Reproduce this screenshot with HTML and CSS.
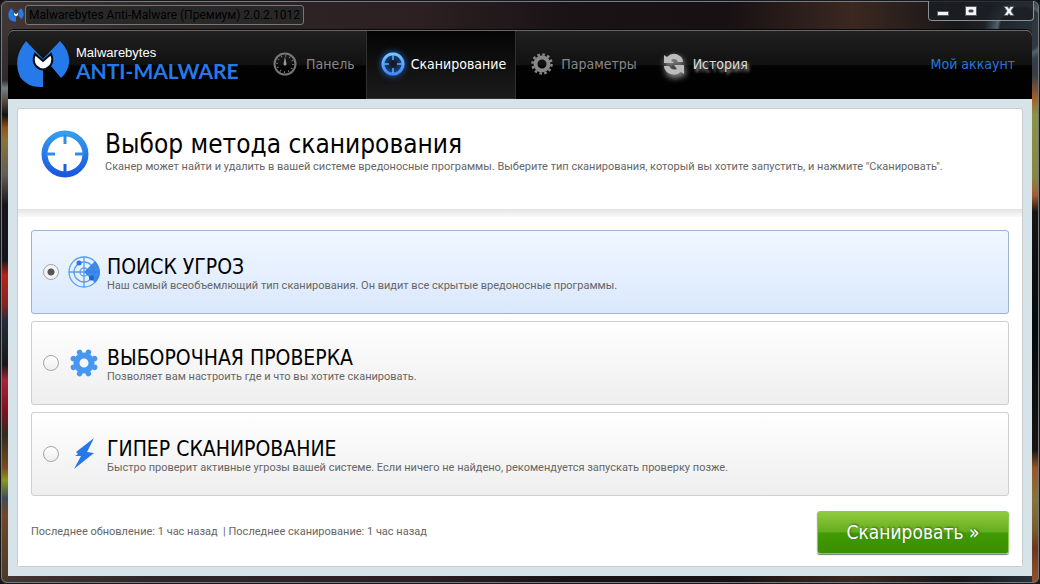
FILE: index.html
```html
<!DOCTYPE html>
<html lang="ru">
<head>
<meta charset="utf-8">
<title>Malwarebytes Anti-Malware</title>
<link rel="stylesheet" href="styles.css">
</head>
<body>
<svg class="defs" width="0" height="0" aria-hidden="true">
  <defs>
    <symbol id="logo" viewBox="0 0 54 48">
      <path fill="#2679e8" d="M10 1 27 19 44 1Q54 11 53 23 52 32 45 38L35 26 27 29V47Q12 48 4 37-4 18 10 1Z"/>
      <path fill="#fff" stroke="#080c14" stroke-width="2" d="M19 14 27 21 35 14Q38 21 34 26 27 33 20 26 16 21 19 14Z"/>
    </symbol>
    <linearGradient id="blue" x1="0" y1="0" x2="0" y2="1"><stop offset="0" stop-color="#359cee"/><stop offset="1" stop-color="#1b58e0"/></linearGradient>
    <linearGradient id="glow" x1="0" y1="0" x2="0" y2="1"><stop offset="0" stop-color="#71c8ff"/><stop offset="1" stop-color="#4086ff"/></linearGradient>
  </defs>
</svg>
<div class="window">
  <div class="titlebar">
    <svg class="app-icon"><use href="#logo"/></svg>
    <span class="title">Malwarebytes Anti-Malware (Премиум) 2.0.2.1012</span>
    <div class="controls">
      <button aria-label="Свернуть"><svg width="14" height="14" viewBox="0 0 14 14"><path fill="#f4f4f4" stroke="#565b68" d="M1.500 7.500h11v4h-11z"/></svg></button>
      <button aria-label="Развернуть"><svg width="14" height="14" viewBox="0 0 14 14"><path fill="#f4f4f4" stroke="#565b68" fill-rule="evenodd" d="M1.500 2.500h11v9h-11zM5 6v2h4V6z"/></svg></button>
      <button class="close" aria-label="Закрыть"><svg width="14" height="14" viewBox="0 0 14 14"><path fill="#f4f4f4" stroke="#565b68" d="M2 2.500h3.500L7 4.500 8.500 2.500H12L9 7l3 4.500H8.500L7 9.500 5.500 11.500H2L5 7z"/></svg></button>
    </div>
  </div>
  <div class="app">
    <header class="header">
      <div class="brand">
        <svg class="brand-mark"><use href="#logo"/></svg>
        <div class="brand-text"><span class="brand-top">Malwarebytes</span><span class="brand-main">ANTI-MALWARE</span></div>
      </div>
      <nav class="nav">
        <a href="#" class="tab">
          <svg class="tab-icon" viewBox="0 0 24 24"><circle cx="12" cy="12" r="10.500" fill="none" stroke="#777" stroke-width="2"/><circle cx="12" cy="12" r="8" fill="none" stroke="#777" stroke-width="2" stroke-dasharray="1 3.190" /><path d="M12 4.500 13.500 12a1.500 1.500 0 0 1-3 0z" fill="#999"/></svg>Панель</a>
        <a href="#" class="tab active" aria-current="page">
          <svg class="tab-icon glow" viewBox="0 0 24 24"><path fill="none" stroke="url(#glow)" stroke-width="3" d="M12 2a10 10 0 1 0 .01 0z"/><path stroke="#62adff" stroke-width="1.500" d="M12 3v5M12 16v5M3 12h5M16 12h5"/></svg>Сканирование</a>
        <a href="#" class="tab settings">
          <svg class="tab-icon" viewBox="0 0 24 24"><circle cx="12" cy="12" r="6.500" fill="none" stroke="#888" stroke-width="4"/><circle cx="12" cy="12" r="9.500" fill="none" stroke="#888" stroke-width="2.500" stroke-dasharray="2.600 2.374"/></svg>Параметры</a>
        <a href="#" class="tab history">
          <svg class="tab-icon" viewBox="0 0 24 24"><path fill="#bcbcbc" d="M2 3 5 5Q11-1 18 4 21 6 21 10H16Q14 5 9 8L12 11H2ZM22 22 19 20Q13 25 6 21 2 18 2 14H7Q10 19 15 17L12 13H22Z"/></svg>История</a>
      </nav>
      <a href="#" class="account">Мой аккаунт</a>
    </header>
    <main class="panel">
      <section class="intro">
        <svg class="target" viewBox="0 0 48 48"><circle cx="24" cy="24" r="20.500" fill="none" stroke="url(#blue)" stroke-width="6"/><path fill="#318be9" d="M22.500 5h3v9h-3zM5 22.500h9v3H5zM34 22.500h9v3h-9z"/><path fill="#1c5de1" d="M22.500 34h3v9h-3z"/></svg>
        <div><h1>Выбор метода сканирования</h1><p>Сканер может найти и удалить в вашей системе вредоносные программы. Выберите тип сканирования, который вы хотите запустить, и нажмите "Сканировать".</p></div>
      </section>
      <form class="form">
        <label class="option">
          <input type="radio" name="scan" checked>
          <svg class="option-icon" viewBox="0 0 32 32"><g fill="none" stroke="#5a9ff0" stroke-width="1.300"><circle cx="16" cy="16" r="15"/><circle cx="16" cy="16" r="10"/><circle cx="16" cy="16" r="4"/><path d="M16 1v30M1 16h30"/></g><path fill="#2f80e7" fill-opacity=".9" d="M16 16 27 5Q37 17 27 27z"/><circle cx="11" cy="7" r="2.500" fill="#2678e6"/><circle cx="23.500" cy="22" r="2.500" fill="#1765d8"/></svg>
          <span class="copy"><span class="name">ПОИСК УГРОЗ</span><span class="note">Наш самый всеобъемлющий тип сканирования. Он видит все скрытые вредоносные программы.</span></span>
        </label>
        <label class="option">
          <input type="radio" name="scan">
          <svg class="option-icon" viewBox="0 0 32 32"><circle cx="16" cy="16" r="7.500" fill="none" stroke="#4797f2" stroke-width="6"/><g stroke="#4797f2" stroke-width="5.500" stroke-linecap="round" transform="rotate(22.500 16 16)"><path d="M16 5V4.500M16 27v.500M5 16h-.500M27 16h.500M8.200 8.200l-.300-.300M23.800 23.800l.300.300M8.200 23.800l-.300.300M23.800 8.200l.300-.300"/></g></svg>
          <span class="copy"><span class="name">ВЫБОРОЧНАЯ ПРОВЕРКА</span><span class="note">Позволяет вам настроить где и что вы хотите сканировать.</span></span>
        </label>
        <label class="option">
          <input type="radio" name="scan">
          <svg class="option-icon" viewBox="0 0 32 32"><path fill="#2678e8" d="M26 0 8 14 10 16 7 18 13 18 6 31 26 15 19 14Z"/></svg>
          <span class="copy"><span class="name">ГИПЕР СКАНИРОВАНИЕ</span><span class="note">Быстро проверит активные угрозы вашей системе. Если ничего не найдено, рекомендуется запускать проверку позже.</span></span>
        </label>
        <div class="footer">
          <span class="status">Последнее обновление: 1 час назад &nbsp;| Последнее сканирование: 1 час назад</span>
          <button type="button" class="scan">Сканировать »</button>
        </div>
      </form>
    </main>
  </div>
</div>
</body>
</html>
```
FILE: styles.css
```css
* { box-sizing: border-box; }
body { margin: 0; font-family: "DejaVu Sans Condensed", "DejaVu Sans", sans-serif; background: #171213; }
.defs { position: absolute; }
h1, p { margin: 0; }
.window {
  min-height: 100vh; display: flex; flex-direction: column; padding: 0 8px 8px;
  border-radius: 7px; box-shadow: inset 0 0 0 1px #15191d, inset 0 0 0 2px #777b7d;
  background:
    radial-gradient(circle at 1022px 30px, transparent 22px, #566169 25px, #33404a 31px, transparent 38px),
    linear-gradient(to bottom, #453a3b 0, #302b2d 80px, #78807f 88px, #463833 105px, #111 115px, #94521f 128px, #88743a 140px, #615c58 175px, #18151a 205px, #151619 260px, #b62219 275px, #822523 305px, #252d3b 320px, #181718 365px, #a72438 380px, #82101b 410px, #302b1e 435px, #7b4a20 468px, #8c981e 480px, #3d4d58 498px, #704926 515px, #49382a 584px) left / 8px 100% no-repeat,
    linear-gradient(to bottom, #2c343d 0, #343d48 75px, #a65d2a 98px, #899447 115px, #878442 180px, #a65b2f 195px, #171512 212px, #040a11 330px, #171512 450px, #9b5527 468px, #85743a 500px, #785f31 528px, #6b381f 548px, #985329 584px) right / 8px 100% no-repeat,
    linear-gradient(to right, #443735, #2e2627 15%, #2c2022 40%, #191316 55%, #171113 70%, #3b2820 82%, #181719 92%, #27333d);
}
.titlebar { height: 30px; display: flex; align-items: flex-start; }
.app-icon { width: 16px; height: 16px; margin-top: 7px; }
.title { margin: 5px 0 0 1px; padding: 0 3px; font: 12px/18px Roboto, sans-serif; color: #000; border: 1px solid #777; border-radius: 3px; background: #292829; white-space: nowrap; }
.controls { display: flex; margin: 1px -2px 0 auto; height: 20px; border: 1px solid #8b9095; border-top: 0; border-radius: 0 0 4px 4px; background: #1b1e23cc; }
.controls button { width: 28px; padding: 0; border: 0; background: none; text-align: center; line-height: 0; }
.controls .close { width: 48px; }
.app { flex: 1; display: flex; flex-direction: column; background: #d6e4e9; border-radius: 6px 6px 0 0; padding-bottom: 9px; }
.header { height: 69px; display: flex; align-items: stretch; background: linear-gradient(#202020, #111 50%, #030303 51%, #000); border-top: 1px solid #686868; border-radius: 6px 6px 0 0; box-shadow: 0 -1px #080808; }
.brand { width: 250px; display: flex; align-items: center; gap: 6px; padding: 0 0 2px 8px; }
.brand-mark { width: 54px; height: 48px; }
.brand-text { display: flex; flex-direction: column; }
.brand-top { font: 13px/15px "Liberation Sans", sans-serif; color: #fff; }
.brand-main { font: 700 21px/21px Lato, sans-serif; color: #2679e8; white-space: nowrap; padding-bottom: 2px; }
.nav { display: flex; }
.tab { display: flex; align-items: center; gap: 9px; padding: 0 11px 2px 15px; color: #878787; font-size: 14px; text-decoration: none; white-space: nowrap; }
.tab-icon { width: 24px; height: 24px; }
.tab.active { gap: 6px; padding: 0 9px 1px 14px; color: #fff; border: 1px solid #303030; border-top: 0; background: linear-gradient(#050505, #1b1b1b); }
.glow { filter: drop-shadow(0 0 3px #247dff); }
.tab.settings { gap: 7px; padding: 0 10px 2px 14px; }
.tab.history { gap: 7px; color: #ddd; text-shadow: 2px 3px 3px #999; }
.history svg { filter: drop-shadow(1px 3px 3px #aaa); }
.account { margin: auto 17px auto auto; padding-bottom: 2px; font-size: 14px; color: #2876dd; text-decoration: none; white-space: nowrap; }
.panel { flex: 1; display: flex; flex-direction: column; margin: 9px 9px 0; background: #fff; border: 1px solid #c8cccd; border-radius: 3px; }
.intro { height: 100px; display: flex; gap: 16px; padding: 21px 23px; }
.target { flex: none; width: 48px; height: 48px; }
h1 { font-size: 26px; line-height: 28px; font-weight: 400; color: #000; }
p { font: 11px/18px Roboto, sans-serif; color: #666; }
.form { flex: 1; display: flex; flex-direction: column; gap: 7px; padding: 21px 13px 12px; background: linear-gradient(#e3e3e3, #fafafa 8px, #fff 8px); }
.option { height: 84px; display: flex; align-items: center; padding: 0 11px; border: 1px solid #cfcfcf; border-radius: 3px; background: linear-gradient(#fff, #eee); }
.option:has(input:checked) { border-color: #9db3cf; background: linear-gradient(#f1f7ff, #dae8fd); }
input { appearance: none; width: 16px; height: 16px; margin: 0; border: 1px solid #a5a5a5; border-radius: 50%; background: linear-gradient(#fff, #eee); }
input:checked { background: radial-gradient(circle, #555 3px, #f3f3f3 4px); }
.option-icon { width: 32px; height: 32px; margin: 0 7px 0 9px; }
.copy { display: flex; flex-direction: column; padding-top: 4px; }
.name { font-size: 21px; line-height: 24px; color: #000; }
.note { font: 11px/14px Roboto, sans-serif; color: #666; }
.footer { display: flex; align-items: center; justify-content: space-between; margin-top: 8px; }
.status { font: 11px/14px Roboto, sans-serif; color: #666; padding-bottom: 2px; }
.scan { width: 192px; height: 43px; padding: 0 0 2px; border: 1px solid #8bc951; border-radius: 3px; color: #fff; font: 19px "DejaVu Sans Condensed", sans-serif; background: linear-gradient(#91cb3f, #63ad1d 49%, #429a06 51%, #398f00); box-shadow: 0 1px 1px #777; text-shadow: 1px -1px 2px #376f12; }
```
